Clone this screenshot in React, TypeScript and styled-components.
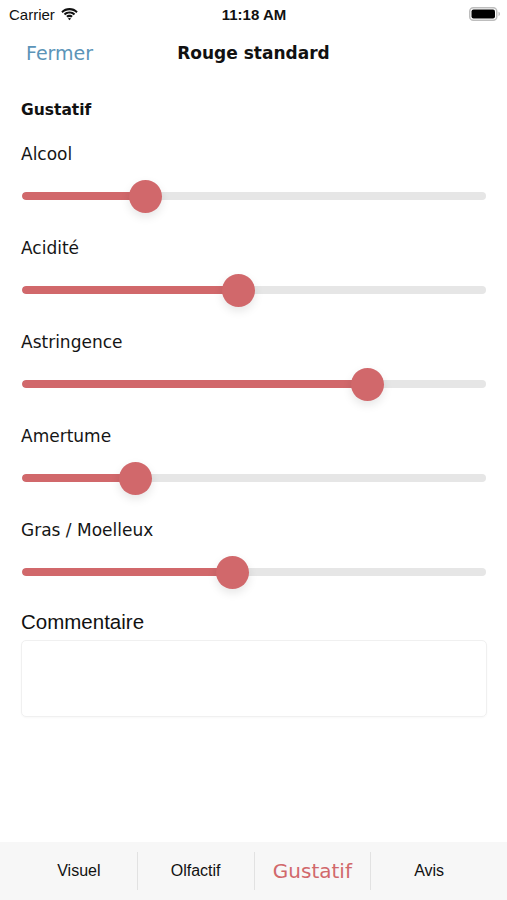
import React from "react";
import styled, { createGlobalStyle } from "styled-components";

const GlobalStyle = createGlobalStyle`
  html, body { margin: 0; padding: 0; background: #ffffff; }
  body { width: 507px; height: 900px; overflow: hidden; font-family: "Liberation Sans", Arial, sans-serif; }
  * { box-sizing: border-box; }
`;

const RED = "#d1686b";
const BRAND = `"DejaVu Sans", "Open Sans", sans-serif`;
const SYS = `"Liberation Sans", Arial, sans-serif`;

const Screen = styled.div`
  width: 507px;
  height: 900px;
  display: flex;
  flex-direction: column;
  background: #fff;
`;

const StatusBar = styled.div`
  height: 28px;
  display: grid;
  grid-template-columns: 1fr auto 1fr;
  align-items: center;
  padding: 0 6px 0 9px;
  font-family: ${SYS};
  font-size: 15px;
  color: #111;
`;

const StatusLeft = styled.div`
  display: flex;
  align-items: center;
  gap: 5px;
`;

const StatusTime = styled.div`
  font-weight: 700;
  font-size: 15px;
  margin-left: -2px;
`;

const StatusRight = styled.div`
  display: flex;
  justify-content: flex-end;
  align-items: center;
`;

const NavBar = styled.div`
  height: 50px;
  display: grid;
  grid-template-columns: 1fr auto 1fr;
  align-items: center;
  padding: 0 26px;
`;

const NavButton = styled.span`
  font-family: ${BRAND};
  font-size: 19px;
  color: #5b94b8;
`;

const NavTitle = styled.span`
  font-family: ${BRAND};
  font-size: 17px;
  font-weight: 600;
  color: #111;
`;

const Content = styled.div`
  flex: 1;
  display: flex;
  flex-direction: column;
  padding: 20px 20px 0 21px;
`;

const SectionTitle = styled.div`
  font-family: ${BRAND};
  font-size: 15.5px;
  font-weight: 600;
  color: #111;
  height: 24px;
  line-height: 24px;
  margin-bottom: 20px;
`;

const Field = styled.div`
  display: flex;
  flex-direction: column;
  height: 94px;
`;

const FieldLabel = styled.div`
  font-family: ${BRAND};
  font-size: 17px;
  color: #151515;
  height: 24px;
  line-height: 24px;
`;

const SliderWrap = styled.div`
  position: relative;
  height: 36px;
  margin-top: 12px;
  margin-left: 1px;
  margin-right: 1px;
`;

const Track = styled.div`
  position: absolute;
  left: 0;
  right: 0;
  top: 14px;
  height: 8px;
  border-radius: 4px;
  background: #e6e6e6;
  overflow: hidden;
`;

const Fill = styled.div`
  height: 100%;
  background: ${RED};
  border-radius: 4px;
`;

const Thumb = styled.div`
  position: absolute;
  top: 1.5px;
  width: 33px;
  height: 33px;
  margin-left: -16.5px;
  border-radius: 50%;
  background: ${RED};
  box-shadow: 0 4px 10px rgba(0, 0, 0, 0.1);
`;

const CommentLabel = styled.div`
  font-family: ${SYS};
  font-size: 20.5px;
  color: #111;
  height: 26px;
  line-height: 26px;
  margin-top: -3px;
`;

const CommentBox = styled.div`
  margin-top: 5px;
  height: 77px;
  border: 1px solid #f0f0f0;
  border-radius: 5px;
  box-shadow: 0 1px 2px rgba(0, 0, 0, 0.03);
`;

const TabBar = styled.div`
  height: 58px;
  background: #f7f7f7;
  display: grid;
  grid-template-columns: repeat(4, 1fr);
  align-items: center;
  padding: 0 20px;
`;

const Tab = styled.div<{ $active?: boolean; $sep?: boolean }>`
  height: 38px;
  display: flex;
  align-items: center;
  justify-content: center;
  border-left: ${(p) => (p.$sep ? "1px solid #e2e2e2" : "1px solid transparent")};
  font-family: ${(p) => (p.$active ? BRAND : SYS)};
  font-size: ${(p) => (p.$active ? "20px" : "16px")};
  font-weight: ${(p) => (p.$active ? 500 : 400)};
  color: ${(p) => (p.$active ? RED : "#111")};
`;

const sliders = [
  { label: "Alcool", pos: 145 },
  { label: "Acidité", pos: 238 },
  { label: "Astringence", pos: 367 },
  { label: "Amertume", pos: 135 },
  { label: "Gras / Moelleux", pos: 232 },
];

const TRACK_START = 22;
const TRACK_W = 464;

const Wifi = () => (
  <svg width="19" height="14" viewBox="0 0 19 14">
    <path d="M9.5 3.2c2.6 0 5 1 6.8 2.7l1.4-1.5C15.5 2.3 12.6 1.1 9.5 1.1S3.5 2.3 1.3 4.4l1.4 1.5C4.5 4.2 6.9 3.2 9.5 3.2z" fill="#111" />
    <path d="M9.5 6.6c1.6 0 3.1.6 4.3 1.7l1.4-1.5C13.7 5.4 11.7 4.5 9.5 4.5S5.3 5.4 3.8 6.8l1.4 1.5c1.2-1.1 2.7-1.7 4.3-1.7z" fill="#111" />
    <path d="M9.5 9.9c.7 0 1.3.3 1.8.7l1.5-1.5c-.9-.8-2-1.3-3.3-1.3s-2.4.5-3.3 1.3l1.5 1.5c.5-.4 1.1-.7 1.8-.7zM9.5 13.2l1.6-1.6c-.4-.4-1-.6-1.6-.6s-1.2.2-1.6.6z" fill="#111" />
  </svg>
);

const Battery = () => (
  <svg width="32" height="14" viewBox="0 0 32 14">
    <rect x="0.75" y="0.75" width="27" height="12.5" rx="3.5" fill="none" stroke="#bdbdbd" strokeWidth="1.5" />
    <rect x="2.5" y="2.5" width="23.5" height="9" rx="2" fill="#000" />
    <path d="M29.5 4.8v4.4c.9-.3 1.5-1.2 1.5-2.2s-.6-1.9-1.5-2.2z" fill="#bdbdbd" />
  </svg>
);

export default function App() {
  return (
    <Screen>
      <GlobalStyle />
      <StatusBar>
        <StatusLeft>
          <span>Carrier</span>
          <Wifi />
        </StatusLeft>
        <StatusTime>11:18 AM</StatusTime>
        <StatusRight>
          <Battery />
        </StatusRight>
      </StatusBar>
      <NavBar>
        <NavButton>Fermer</NavButton>
        <NavTitle>Rouge standard</NavTitle>
        <span />
      </NavBar>
      <Content>
        <SectionTitle>Gustatif</SectionTitle>
        {sliders.map((s) => {
          const pct = ((s.pos - TRACK_START) / TRACK_W) * 100;
          return (
            <Field key={s.label}>
              <FieldLabel>{s.label}</FieldLabel>
              <SliderWrap>
                <Track>
                  <Fill style={{ width: `${pct}%` }} />
                </Track>
                <Thumb style={{ left: `${pct}%` }} />
              </SliderWrap>
            </Field>
          );
        })}
        <CommentLabel>Commentaire</CommentLabel>
        <CommentBox />
      </Content>
      <TabBar>
        <Tab>Visuel</Tab>
        <Tab $sep>Olfactif</Tab>
        <Tab $sep $active>Gustatif</Tab>
        <Tab $sep>Avis</Tab>
      </TabBar>
    </Screen>
  );
}
